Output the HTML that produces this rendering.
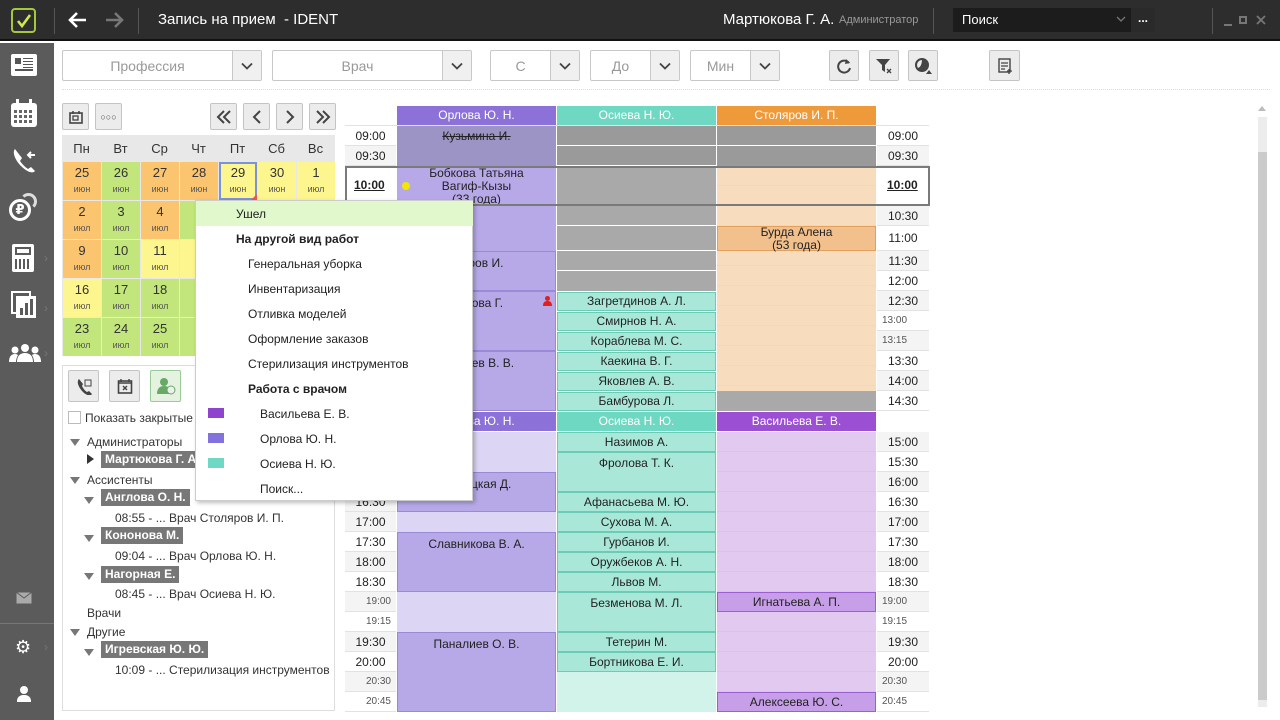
<!DOCTYPE html>
<html><head><meta charset="utf-8"><style>
*{margin:0;padding:0;box-sizing:border-box}
body{width:1280px;height:720px;overflow:hidden;background:#fff;font-family:"Liberation Sans","DejaVu Sans",sans-serif;font-size:12px;color:#222;position:relative}
.a{position:absolute}
.c{position:absolute;display:flex;align-items:center;justify-content:center;text-align:center;line-height:13px}
.t{position:absolute;display:flex;align-items:center;justify-content:center;font-size:12px;border-bottom:1px solid #e2e2e2}
.ts{font-size:10px;color:#555}
.dd{position:absolute;height:31px;border:1px solid #c8c8c8;border-radius:2px;background:#fff;color:#999;font-size:14px;display:flex;align-items:center}
.dd span{flex:1;text-align:center}
.dd i{width:29px;height:100%;border-left:1px solid #c8c8c8;background:#f0f0f0;display:flex;align-items:center;justify-content:center}
.btn{position:absolute;border:1px solid #c4c4c4;background:#ececec;border-radius:2px;display:flex;align-items:center;justify-content:center;color:#444}
.day{position:absolute;width:38px;height:38px;text-align:center;font-size:13px;color:#333;padding-top:4px;line-height:14px}
.day small{display:block;font-size:9px;color:#555;margin-top:2px}
.o{background:#fbc46f}.g{background:#c2e67b}.y{background:#fdf58d}
.mi{position:absolute;left:0;width:277px;height:25px;display:flex;align-items:center;font-size:12px;color:#222}
.tag{background:#777;color:#fff;font-weight:bold;padding:0 4px;height:17px;line-height:17px;position:absolute}
.tri{position:absolute;width:0;height:0;border-left:5px solid transparent;border-right:5px solid transparent;border-top:7px solid #777}
.tl{position:absolute;font-size:12px;color:#333}
.chev{position:absolute;left:44px;color:#777;font-size:12px}
</style></head><body>
<!-- top bar -->
<div class="a" style="left:0;top:0;width:1280px;height:41px;background:#2d2d2d;border-bottom:2px solid #111"></div>
<div class="a" style="left:11px;top:8px;width:25px;height:25px;border:2px solid #a5c83a;border-radius:4px"></div>
<svg class="a" style="left:15px;top:12px" width="18" height="18"><path d="M3 9l4 5 8-11" stroke="#d0e84a" stroke-width="2.6" fill="none"/></svg>
<div class="a" style="left:54px;top:8px;width:1px;height:26px;background:#555"></div>
<svg class="a" style="left:66px;top:10px" width="22" height="20"><path d="M20 10H4M11 3L4 10l7 7" stroke="#fff" stroke-width="2.6" fill="none"/></svg>
<svg class="a" style="left:104px;top:10px" width="22" height="20"><path d="M2 10h16M11 3l7 7-7 7" stroke="#777" stroke-width="2.6" fill="none"/></svg>
<div class="a" style="left:138px;top:8px;width:1px;height:26px;background:#555"></div>
<div class="a" style="left:158px;top:11px;color:#fff;font-size:15px">Запись на прием &nbsp;- IDENT</div>
<div class="a" style="left:723px;top:11px;color:#fff;font-size:15px">Мартюкова Г. А.</div>
<div class="a" style="left:839px;top:14px;color:#999;font-size:11px">Администратор</div>
<div class="a" style="left:933px;top:8px;width:1px;height:26px;background:#555"></div>
<div class="a" style="left:953px;top:8px;width:202px;height:24px;background:#1c1c1c"></div>
<div class="a" style="left:962px;top:12px;color:#fff;font-size:13px">Поиск</div>
<svg class="a" style="left:1116px;top:15px" width="10" height="8"><path d="M1 2l4 4 4-4" stroke="#777" stroke-width="1.3" fill="none"/></svg>
<div class="a" style="left:1131px;top:8px;width:24px;height:24px;background:#2a2a2a;color:#fff;font-weight:bold;text-align:center;line-height:20px">...</div>
<div class="a" style="left:1212px;top:8px;width:1px;height:26px;background:#555"></div>
<div class="a" style="left:1224px;top:24px;width:8px;height:2px;background:#777"></div>
<div class="a" style="left:1239px;top:16px;width:8px;height:8px;border:2px solid #777"></div>
<svg class="a" style="left:1256px;top:15px" width="10" height="10"><path d="M1 1l8 8M9 1l-8 8" stroke="#777" stroke-width="1.8"/></svg>
<!-- sidebar -->
<div class="a" style="left:0;top:43px;width:54px;height:677px;background:#5b5b5b"></div>
<div class="a" style="left:11px;top:54px;width:26px;height:22px;background:#fff;border-radius:2px"></div>
<div class="a" style="left:15px;top:58px;width:6px;height:6px;background:#555"></div>
<div class="a" style="left:23px;top:58px;width:10px;height:10px;background:repeating-linear-gradient(180deg,#555 0 1px,#fff 1px 3px)"></div>
<div class="a" style="left:15px;top:69px;width:18px;height:2px;background:#555"></div>
<div class="a" style="left:11px;top:103px;width:26px;height:24px;background:#fff;border-radius:3px"></div>
<div class="a" style="left:14px;top:110px;width:20px;height:14px;background-image:repeating-linear-gradient(90deg,transparent 0 3px,#fff 3px 5px),repeating-linear-gradient(180deg,#666 0 3px,#fff 3px 5px)"></div>
<div class="a" style="left:16px;top:99px;width:3px;height:6px;background:#fff"></div><div class="a" style="left:29px;top:99px;width:3px;height:6px;background:#fff"></div>
<svg class="a" style="left:11px;top:146px" width="26" height="28"><path d="M4 3c-3 3 0 11 6 17s12 8 14 5l-4-4-3 2c-3-2-6-5-8-8l2-3-4-5z" fill="#fff"/><path d="M24 9h-7M20 6l-3 3 3 3" stroke="#fff" stroke-width="2" fill="none"/></svg>
<div class="a" style="left:9px;top:199px;width:22px;height:22px;border:3px solid #fff;border-radius:50%;color:#fff;font-weight:bold;text-align:center;line-height:16px;font-size:13px">₽</div>
<div class="a" style="left:20px;top:193px;width:17px;height:17px;border:3px solid #ddd;border-radius:50%;border-left-color:transparent;border-bottom-color:transparent"></div>
<div class="a" style="left:12px;top:244px;width:22px;height:28px;background:#fff;border-radius:2px"></div>
<div class="a" style="left:15px;top:247px;width:16px;height:8px;border:2px solid #5b5b5b"></div>
<div class="a" style="left:15px;top:259px;width:16px;height:10px;background-image:repeating-linear-gradient(90deg,#5b5b5b 0 2px,#fff 2px 4px)"></div>
<div class="chev" style="top:251px">›</div>
<div class="a" style="left:11px;top:291px;width:20px;height:23px;border:2px solid #fff"></div>
<div class="a" style="left:16px;top:296px;width:20px;height:22px;background:#fff"></div>
<div class="a" style="left:20px;top:308px;width:3px;height:7px;background:#5b5b5b"></div><div class="a" style="left:25px;top:303px;width:3px;height:12px;background:#5b5b5b"></div><div class="a" style="left:30px;top:299px;width:3px;height:16px;background:#5b5b5b"></div>
<div class="chev" style="top:301px">›</div>
<svg class="a" style="left:9px;top:343px" width="32" height="20"><circle cx="16" cy="5" r="4" fill="#fff"/><circle cx="6" cy="7" r="3.5" fill="#fff"/><circle cx="26" cy="7" r="3.5" fill="#fff"/><path d="M8 19c0-6 3-9 8-9s8 3 8 9zM0 19c0-5 2-8 6-8 2 0 3 1 3 1-1 2-2 4-2 7zM32 19c0-5-2-8-6-8-2 0-3 1-3 1 1 2 2 4 2 7z" fill="#fff"/></svg>
<div class="chev" style="top:346px">›</div>
<svg class="a" style="left:16px;top:592px" width="16" height="12"><rect x="0.5" y="0.5" width="15" height="11" fill="#aaa"/><path d="M0 0l8 6 8-6" stroke="#5b5b5b" fill="none"/></svg>
<div class="a" style="left:0;top:623px;width:54px;height:1px;background:#777"></div>
<div class="a" style="left:15px;top:637px;color:#fff;font-size:18px">⚙</div>
<div class="chev" style="top:640px">›</div>
<div class="a" style="left:17px;top:686px;width:14px;height:16px"><div class="a" style="left:3px;top:0;width:8px;height:8px;border-radius:50%;background:#fff"></div><div class="a" style="left:0;top:9px;width:14px;height:7px;border-radius:6px 6px 0 0;background:#fff"></div></div>
<!-- toolbar -->
<div class="dd" style="left:62px;top:50px;width:200px"><span>Профессия</span><i><svg width="12" height="8"><path d="M1 1.5l5 5 5-5" stroke="#444" stroke-width="1.8" fill="none"/></svg></i></div>
<div class="dd" style="left:272px;top:50px;width:200px"><span>Врач</span><i><svg width="12" height="8"><path d="M1 1.5l5 5 5-5" stroke="#444" stroke-width="1.8" fill="none"/></svg></i></div>
<div class="dd" style="left:490px;top:50px;width:90px"><span>С</span><i><svg width="12" height="8"><path d="M1 1.5l5 5 5-5" stroke="#444" stroke-width="1.8" fill="none"/></svg></i></div>
<div class="dd" style="left:590px;top:50px;width:90px"><span>До</span><i><svg width="12" height="8"><path d="M1 1.5l5 5 5-5" stroke="#444" stroke-width="1.8" fill="none"/></svg></i></div>
<div class="dd" style="left:690px;top:50px;width:90px"><span>Мин</span><i><svg width="12" height="8"><path d="M1 1.5l5 5 5-5" stroke="#444" stroke-width="1.8" fill="none"/></svg></i></div>
<div class="btn" style="left:829px;top:50px;width:30px;height:31px"><svg width="16" height="16"><path d="M13 5A6 6 0 1 0 14 10" stroke="#444" stroke-width="2" fill="none"/><path d="M10 1l4 4-5 1z" fill="#444"/></svg></div>
<div class="btn" style="left:869px;top:50px;width:30px;height:31px"><svg width="18" height="18"><path d="M1 2h14l-5 6v7l-3-2V8z" fill="#444"/><path d="M12 12l4 4M16 12l-4 4" stroke="#444" stroke-width="1.4"/></svg></div>
<div class="btn" style="left:908px;top:50px;width:30px;height:31px"><svg width="18" height="18"><circle cx="8" cy="8" r="6" stroke="#444" stroke-width="2" fill="none"/><path d="M8 2a6 6 0 0 1 0 12c-3 0-5-2-5-3 3 0 5-3 5-9z" fill="#444"/><path d="M12 17l3-4 3 4z" fill="#444"/></svg></div>
<div class="btn" style="left:989px;top:50px;width:31px;height:31px"><svg width="16" height="16"><rect x="2" y="1" width="11" height="13" stroke="#444" stroke-width="1.4" fill="none"/><path d="M4 5h7M4 8h7M4 11h4M12 11v5M10 13h5" stroke="#444" stroke-width="1.3"/></svg></div>
<div class="a" style="left:62px;top:89px;width:1208px;border-top:1px dotted #ddd"></div>
<!-- nav -->
<div class="btn" style="left:62px;top:103px;width:27px;height:27px"><svg width="14" height="14"><rect x="1" y="3" width="12" height="10" stroke="#444" stroke-width="1.6" fill="none"/><rect x="4" y="6" width="5" height="4" stroke="#444" stroke-width="1.3" fill="none"/><path d="M4 1v3M10 1v3" stroke="#444" stroke-width="1.5"/></svg></div>
<div class="btn" style="left:95px;top:103px;width:27px;height:27px;font-size:9px">○○○</div>
<div class="btn" style="left:210px;top:103px;width:27px;height:27px"><svg width="16" height="14"><path d="M8 1L2 7l6 6M14 1L8 7l6 6" stroke="#444" stroke-width="2" fill="none"/></svg></div>
<div class="btn" style="left:243px;top:103px;width:27px;height:27px"><svg width="10" height="14"><path d="M8 1L2 7l6 6" stroke="#444" stroke-width="2" fill="none"/></svg></div>
<div class="btn" style="left:276px;top:103px;width:27px;height:27px"><svg width="10" height="14"><path d="M2 1l6 6-6 6" stroke="#444" stroke-width="2" fill="none"/></svg></div>
<div class="btn" style="left:309px;top:103px;width:27px;height:27px"><svg width="16" height="14"><path d="M2 1l6 6-6 6M8 1l6 6-6 6" stroke="#444" stroke-width="2" fill="none"/></svg></div>
<!-- calendar -->
<div class="a" style="left:62px;top:135px;width:273px;height:221px;background:#e8e8e8"></div>
<div class="a" style="left:62px;top:141px;width:273px;display:flex;font-size:13px;color:#333"><span style="width:39px;text-align:center">Пн</span><span style="width:39px;text-align:center">Вт</span><span style="width:39px;text-align:center">Ср</span><span style="width:39px;text-align:center">Чт</span><span style="width:39px;text-align:center">Пт</span><span style="width:39px;text-align:center">Сб</span><span style="width:39px;text-align:center">Вс</span></div>
<div class="day o" style="left:63px;top:162px">25<small>июн</small></div>
<div class="day g" style="left:102px;top:162px">26<small>июн</small></div>
<div class="day o" style="left:141px;top:162px">27<small>июн</small></div>
<div class="day o" style="left:180px;top:162px">28<small>июн</small></div>
<div class="day y" style="left:219px;top:162px;border:2px solid #7b93d8;padding-top:2px">29<small>июн</small></div>
<div class="a" style="left:251px;top:194px;border-left:6px solid transparent;border-bottom:6px solid #e55"></div>
<div class="day y" style="left:258px;top:162px">30<small>июн</small></div>
<div class="day y" style="left:297px;top:162px">1<small>июл</small></div>
<div class="day o" style="left:63px;top:201px">2<small>июл</small></div>
<div class="day g" style="left:102px;top:201px">3<small>июл</small></div>
<div class="day o" style="left:141px;top:201px">4<small>июл</small></div>
<div class="day g" style="left:180px;top:201px"></div>
<div class="day o" style="left:63px;top:240px">9<small>июл</small></div>
<div class="day g" style="left:102px;top:240px">10<small>июл</small></div>
<div class="day y" style="left:141px;top:240px">11<small>июл</small></div>
<div class="day y" style="left:180px;top:240px"></div>
<div class="day y" style="left:63px;top:279px">16<small>июл</small></div>
<div class="day g" style="left:102px;top:279px">17<small>июл</small></div>
<div class="day g" style="left:141px;top:279px">18<small>июл</small></div>
<div class="day g" style="left:180px;top:279px"></div>
<div class="day g" style="left:63px;top:318px">23<small>июл</small></div>
<div class="day g" style="left:102px;top:318px">24<small>июл</small></div>
<div class="day g" style="left:141px;top:318px">25<small>июл</small></div>
<div class="day g" style="left:180px;top:318px"></div>
<!-- left panel -->
<div class="a" style="left:62px;top:365px;width:273px;height:346px;border:1px solid #ddd"></div>
<div class="btn" style="left:68px;top:370px;width:31px;height:32px"><svg width="16" height="18"><path d="M3 2c-3 3 0 9 4 13s8 4 9 2l-3-3-2 1c-2-1-4-4-5-6l1-2z" fill="#444"/><rect x="9" y="3" width="6" height="6" stroke="#444" fill="none"/></svg></div>
<div class="btn" style="left:109px;top:370px;width:31px;height:32px"><svg width="16" height="16"><rect x="1.5" y="3" width="13" height="12" stroke="#444" stroke-width="1.6" fill="none"/><path d="M1 5h14M4 1v3M12 1v3M6 8l4 4M10 8l-4 4" stroke="#444" stroke-width="1.4"/></svg></div>
<div class="btn" style="left:150px;top:370px;width:31px;height:32px;border-color:#9c9;background:#e6f2e0"><svg width="20" height="18"><circle cx="8" cy="5" r="4" fill="#6a6"/><path d="M1 17c0-6 3-8 7-8s7 2 7 8z" fill="#6a6"/><circle cx="15" cy="13" r="4" fill="#eee" stroke="#6a6"/></svg></div>
<div class="a" style="left:68px;top:411px;width:13px;height:13px;border:1px solid #bbb"></div>
<div class="tl" style="left:85px;top:411px">Показать закрытые</div>
<div class="tri" style="left:70px;top:439px"></div><div class="tl" style="left:87px;top:435px">Администраторы</div>
<div class="a" style="left:87px;top:454px;border-top:5px solid transparent;border-bottom:5px solid transparent;border-left:7px solid #333"></div>
<div class="tag" style="left:101px;top:451px">Мартюкова Г. А</div>
<div class="tri" style="left:70px;top:477px"></div><div class="tl" style="left:87px;top:473px">Ассистенты</div>
<div class="tri" style="left:84px;top:497px"></div><div class="tag" style="left:101px;top:489px">Англова О. Н.</div>
<div class="tl" style="left:115px;top:511px">08:55 - ... Врач Столяров И. П.</div>
<div class="tri" style="left:84px;top:535px"></div><div class="tag" style="left:101px;top:527px">Кононова М.</div>
<div class="tl" style="left:115px;top:549px">09:04 - ... Врач Орлова Ю. Н.</div>
<div class="tri" style="left:84px;top:573px"></div><div class="tag" style="left:101px;top:566px">Нагорная Е.</div>
<div class="tl" style="left:115px;top:587px">08:45 - ... Врач Осиева Н. Ю.</div>
<div class="tl" style="left:87px;top:606px">Врачи</div>
<div class="tri" style="left:70px;top:629px"></div><div class="tl" style="left:87px;top:625px">Другие</div>
<div class="tri" style="left:84px;top:649px"></div><div class="tag" style="left:101px;top:641px">Игревская Ю. Ю.</div>
<div class="tl" style="left:115px;top:663px">10:09 - ... Стерилизация инструментов</div>
<!-- grid headers -->
<div class="c" style="left:397px;top:106px;width:159px;height:19px;background:#8c72d8;color:#fff">Орлова Ю. Н.</div>
<div class="c" style="left:557px;top:106px;width:159px;height:19px;background:#6fd8c2;color:#fff">Осиева Н. Ю.</div>
<div class="c" style="left:717px;top:106px;width:159px;height:19px;background:#ee9a3a;color:#fff">Столяров И. П.</div>
<div class="c" style="left:397px;top:412px;width:159px;height:19px;background:#8c72d8;color:#fff">Орлова Ю. Н.</div>
<div class="c" style="left:557px;top:412px;width:159px;height:19px;background:#6fd8c2;color:#fff">Осиева Н. Ю.</div>
<div class="c" style="left:717px;top:412px;width:159px;height:19px;background:#9b4fd2;color:#fff">Васильева Е. В.</div>
<!-- time columns -->
<div class="a" style="left:345px;top:125px;width:584px;height:287px;border-top:1px solid #e2e2e2"></div>
<div class="t" style="left:345px;top:126px;width:51px;height:20px;background:#fff">09:00</div>
<div class="t" style="left:345px;top:146px;width:51px;height:20px;background:#f4f4f4">09:30</div>
<div class="t" style="left:345px;top:206px;width:51px;height:20px;background:#f4f4f4">10:30</div>
<div class="t" style="left:345px;top:226px;width:51px;height:25px;background:#fff">11:00</div>
<div class="t" style="left:345px;top:251px;width:51px;height:20px;background:#f4f4f4">11:30</div>
<div class="t" style="left:345px;top:271px;width:51px;height:20px;background:#fff">12:00</div>
<div class="t" style="left:345px;top:291px;width:51px;height:20px;background:#f4f4f4">12:30</div>
<div class="t" style="left:345px;top:311px;width:51px;height:20px;background:#fff">13:00</div>
<div class="t" style="left:345px;top:331px;width:51px;height:20px;background:#f4f4f4">13:15</div>
<div class="t" style="left:345px;top:351px;width:51px;height:20px;background:#fff">13:30</div>
<div class="t" style="left:345px;top:371px;width:51px;height:20px;background:#f4f4f4">14:00</div>
<div class="t" style="left:345px;top:391px;width:51px;height:20px;background:#fff">14:30</div>
<div class="t" style="left:877px;top:126px;width:52px;height:20px;background:#fff">09:00</div>
<div class="t" style="left:877px;top:146px;width:52px;height:20px;background:#f4f4f4">09:30</div>
<div class="t" style="left:877px;top:206px;width:52px;height:20px;background:#f4f4f4">10:30</div>
<div class="t" style="left:877px;top:226px;width:52px;height:25px;background:#fff">11:00</div>
<div class="t" style="left:877px;top:251px;width:52px;height:20px;background:#f4f4f4">11:30</div>
<div class="t" style="left:877px;top:271px;width:52px;height:20px;background:#fff">12:00</div>
<div class="t" style="left:877px;top:291px;width:52px;height:20px;background:#f4f4f4">12:30</div>
<div class="t ts" style="left:877px;top:311px;width:52px;height:20px;background:#fff;justify-content:flex-start;padding-left:5px">13:00</div>
<div class="t ts" style="left:877px;top:331px;width:52px;height:20px;background:#f4f4f4;justify-content:flex-start;padding-left:5px">13:15</div>
<div class="t" style="left:877px;top:351px;width:52px;height:20px;background:#fff">13:30</div>
<div class="t" style="left:877px;top:371px;width:52px;height:20px;background:#f4f4f4">14:00</div>
<div class="t" style="left:877px;top:391px;width:52px;height:20px;background:#fff">14:30</div>
<!-- bottom times -->
<div class="t" style="left:345px;top:432px;width:51px;height:20px;background:#fff">15:00</div>
<div class="t" style="left:345px;top:452px;width:51px;height:20px;background:#f4f4f4">15:30</div>
<div class="t" style="left:345px;top:472px;width:51px;height:20px;background:#fff">16:00</div>
<div class="t" style="left:345px;top:492px;width:51px;height:20px;background:#f4f4f4">16:30</div>
<div class="t" style="left:345px;top:512px;width:51px;height:20px;background:#f4f4f4">17:00</div>
<div class="t" style="left:345px;top:532px;width:51px;height:20px;background:#fff">17:30</div>
<div class="t" style="left:345px;top:552px;width:51px;height:20px;background:#f4f4f4">18:00</div>
<div class="t" style="left:345px;top:572px;width:51px;height:20px;background:#fff">18:30</div>
<div class="t ts" style="left:345px;top:592px;width:51px;height:20px;background:#f4f4f4;justify-content:flex-end;padding-right:5px">19:00</div>
<div class="t ts" style="left:345px;top:612px;width:51px;height:20px;background:#fff;justify-content:flex-end;padding-right:5px">19:15</div>
<div class="t" style="left:345px;top:632px;width:51px;height:20px;background:#f4f4f4">19:30</div>
<div class="t" style="left:345px;top:652px;width:51px;height:20px;background:#fff">20:00</div>
<div class="t ts" style="left:345px;top:672px;width:51px;height:20px;background:#f4f4f4;justify-content:flex-end;padding-right:5px">20:30</div>
<div class="t ts" style="left:345px;top:692px;width:51px;height:20px;background:#fff;justify-content:flex-end;padding-right:5px">20:45</div>
<div class="t" style="left:877px;top:432px;width:52px;height:20px;background:#f4f4f4">15:00</div>
<div class="t" style="left:877px;top:452px;width:52px;height:20px;background:#fff">15:30</div>
<div class="t" style="left:877px;top:472px;width:52px;height:20px;background:#f4f4f4">16:00</div>
<div class="t" style="left:877px;top:492px;width:52px;height:20px;background:#fff">16:30</div>
<div class="t" style="left:877px;top:512px;width:52px;height:20px;background:#f4f4f4">17:00</div>
<div class="t" style="left:877px;top:532px;width:52px;height:20px;background:#fff">17:30</div>
<div class="t" style="left:877px;top:552px;width:52px;height:20px;background:#f4f4f4">18:00</div>
<div class="t" style="left:877px;top:572px;width:52px;height:20px;background:#fff">18:30</div>
<div class="t ts" style="left:877px;top:592px;width:52px;height:20px;background:#f4f4f4;justify-content:flex-start;padding-left:5px">19:00</div>
<div class="t ts" style="left:877px;top:612px;width:52px;height:20px;background:#fff;justify-content:flex-start;padding-left:5px">19:15</div>
<div class="t" style="left:877px;top:632px;width:52px;height:20px;background:#f4f4f4">19:30</div>
<div class="t" style="left:877px;top:652px;width:52px;height:20px;background:#fff">20:00</div>
<div class="t ts" style="left:877px;top:672px;width:52px;height:20px;background:#f4f4f4;justify-content:flex-start;padding-left:5px">20:30</div>
<div class="t ts" style="left:877px;top:692px;width:52px;height:20px;background:#fff;justify-content:flex-start;padding-left:5px">20:45</div>
<!-- top grid: Orlova -->
<div class="c" style="left:397px;top:126px;width:159px;height:40px;background:#9d94c6;align-items:flex-start;padding-top:4px;text-decoration:line-through">Кузьмина И.</div>
<div class="c" style="left:397px;top:166px;width:159px;height:85px;background:#b7a9e8;align-items:flex-start;padding-top:1px">Бобкова Татьяна<br>Вагиф-Кызы<br>(33 года)</div>
<div class="a" style="left:402px;top:182px;width:8px;height:8px;border-radius:50%;background:#f3e600"></div>
<div class="c" style="left:397px;top:251px;width:159px;height:40px;background:#b7a9e8;border:1px solid #9a88d8;align-items:flex-start;padding-top:5px">Егоров И.</div>
<div class="c" style="left:397px;top:291px;width:159px;height:60px;background:#b7a9e8;border:1px solid #9a88d8;align-items:flex-start;padding-top:5px">Попова Г.</div>
<svg class="a" style="left:543px;top:296px" width="9" height="10"><circle cx="4.5" cy="2.5" r="2.5" fill="#e02020"/><path d="M0 10c0-4 2-5 4.5-5s4.5 1 4.5 5z" fill="#e02020"/></svg>
<div class="c" style="left:397px;top:351px;width:159px;height:60px;background:#b7a9e8;border:1px solid #9a88d8;align-items:flex-start;padding-top:5px">Сергеев В. В.</div>
<!-- Osieva top -->
<div class="a" style="left:557px;top:126px;width:159px;height:19px;background:#9a9a9a"></div>
<div class="a" style="left:557px;top:146px;width:159px;height:19px;background:#9a9a9a"></div>
<div class="a" style="left:557px;top:166px;width:159px;height:40px;background:#a9a9a9"></div>
<div class="a" style="left:557px;top:206px;width:159px;height:19px;background:#a9a9a9"></div>
<div class="a" style="left:557px;top:226px;width:159px;height:24px;background:#a9a9a9"></div>
<div class="a" style="left:557px;top:251px;width:159px;height:19px;background:#a9a9a9"></div>
<div class="a" style="left:557px;top:271px;width:159px;height:20px;background:#a9a9a9"></div>
<div class="c" style="left:557px;top:292px;width:159px;height:19px;background:#a9e8d8;border:1px solid #6ccbb5">Загретдинов А. Л.</div>
<div class="c" style="left:557px;top:312px;width:159px;height:19px;background:#a9e8d8;border:1px solid #6ccbb5">Смирнов Н. А.</div>
<div class="c" style="left:557px;top:332px;width:159px;height:19px;background:#a9e8d8;border:1px solid #6ccbb5">Кораблева М. С.</div>
<div class="c" style="left:557px;top:352px;width:159px;height:19px;background:#a9e8d8;border:1px solid #6ccbb5">Каекина В. Г.</div>
<div class="c" style="left:557px;top:372px;width:159px;height:19px;background:#a9e8d8;border:1px solid #6ccbb5">Яковлев А. В.</div>
<div class="c" style="left:557px;top:392px;width:159px;height:19px;background:#a9e8d8;border:1px solid #6ccbb5">Бамбурова Л.</div>
<!-- Stolyarov top -->
<div class="a" style="left:717px;top:126px;width:159px;height:19px;background:#9a9a9a"></div>
<div class="a" style="left:717px;top:146px;width:159px;height:20px;background:#9a9a9a"></div>
<div class="a" style="left:717px;top:166px;width:159px;height:225px;background:#f8dcbe;background-image:repeating-linear-gradient(180deg,#f8dcbe 0 19px,#f6d6b6 19px 20px)"></div>
<div class="c" style="left:717px;top:226px;width:159px;height:25px;background:#f2c08c;border:1px solid #e2a05c">Бурда Алена<br>(53 года)</div>
<div class="a" style="left:717px;top:391px;width:159px;height:20px;background:#a9a9a9"></div>
<!-- highlighted row -->
<div class="a" style="left:345px;top:166px;width:585px;height:40px;border:2px solid #7a7a7a"></div>
<div class="a" style="left:354px;top:178px;font-weight:bold;text-decoration:underline;font-size:12px">10:00</div>
<div class="a" style="left:887px;top:178px;font-weight:bold;text-decoration:underline;font-size:12px">10:00</div>
<!-- bottom grid -->
<div class="a" style="left:397px;top:432px;width:159px;height:280px;background:#ddd5f4"></div>
<div class="c" style="left:397px;top:472px;width:159px;height:40px;background:#b7a9e8;border:1px solid #9a88d8;align-items:flex-start;padding-top:5px">Высоцкая Д.</div>
<div class="c" style="left:397px;top:532px;width:159px;height:60px;background:#b7a9e8;border:1px solid #9a88d8;align-items:flex-start;padding-top:5px">Славникова В. А.</div>
<div class="c" style="left:397px;top:632px;width:159px;height:80px;background:#b7a9e8;border:1px solid #9a88d8;align-items:flex-start;padding-top:5px">Паналиев О. В.</div>
<div class="a" style="left:557px;top:432px;width:159px;height:280px;background:#d2f3ea"></div>
<div class="c" style="left:557px;top:432px;width:159px;height:20px;background:#a9e8d8;border:1px solid #6ccbb5">Назимов А.</div>
<div class="c" style="left:557px;top:452px;width:159px;height:40px;background:#a9e8d8;border:1px solid #6ccbb5;align-items:flex-start;padding-top:4px">Фролова Т. К.</div>
<div class="c" style="left:557px;top:492px;width:159px;height:20px;background:#a9e8d8;border:1px solid #6ccbb5">Афанасьева М. Ю.</div>
<div class="c" style="left:557px;top:512px;width:159px;height:20px;background:#a9e8d8;border:1px solid #6ccbb5">Сухова М. А.</div>
<div class="c" style="left:557px;top:532px;width:159px;height:20px;background:#a9e8d8;border:1px solid #6ccbb5">Гурбанов И.</div>
<div class="c" style="left:557px;top:552px;width:159px;height:20px;background:#a9e8d8;border:1px solid #6ccbb5">Оружбеков А. Н.</div>
<div class="c" style="left:557px;top:572px;width:159px;height:20px;background:#a9e8d8;border:1px solid #6ccbb5">Львов М.</div>
<div class="c" style="left:557px;top:592px;width:159px;height:40px;background:#a9e8d8;border:1px solid #6ccbb5;align-items:flex-start;padding-top:4px">Безменова М. Л.</div>
<div class="c" style="left:557px;top:632px;width:159px;height:20px;background:#a9e8d8;border:1px solid #6ccbb5">Тетерин М.</div>
<div class="c" style="left:557px;top:652px;width:159px;height:20px;background:#a9e8d8;border:1px solid #6ccbb5">Бортникова Е. И.</div>
<div class="a" style="left:717px;top:432px;width:159px;height:280px;background:#e2c9ef;background-image:repeating-linear-gradient(180deg,#e2c9ef 0 19px,#dcc2ea 19px 20px)"></div>
<div class="c" style="left:717px;top:592px;width:159px;height:20px;background:#c79ee8;border:1px solid #9a5fd0">Игнатьева А. П.</div>
<div class="c" style="left:717px;top:692px;width:159px;height:20px;background:#c79ee8;border:1px solid #9a5fd0">Алексеева Ю. С.</div>
<!-- scrollbar -->
<div class="a" style="left:1258px;top:117px;width:9px;height:590px;background:#ececec"></div>
<div class="a" style="left:1258px;top:152px;width:9px;height:548px;background:#cbcbcb"></div>
<div class="a" style="left:1258px;top:106px;border-left:4px solid transparent;border-right:4px solid transparent;border-bottom:5px solid #bbb"></div>
<!-- context menu -->
<div class="a" style="left:195px;top:200px;width:278px;height:301px;background:#fff;border:1px solid #ccc;box-shadow:2px 2px 4px rgba(0,0,0,.25)">
<div class="mi" style="top:0;background:#e0f8cc;padding-left:40px">Ушел</div>
<div class="mi" style="top:25px;padding-left:40px;font-weight:bold">На другой вид работ</div>
<div class="mi" style="top:50px;padding-left:52px">Генеральная уборка</div>
<div class="mi" style="top:75px;padding-left:52px">Инвентаризация</div>
<div class="mi" style="top:100px;padding-left:52px">Отливка моделей</div>
<div class="mi" style="top:125px;padding-left:52px">Оформление заказов</div>
<div class="mi" style="top:150px;padding-left:52px">Стерилизация инструментов</div>
<div class="mi" style="top:175px;padding-left:52px;font-weight:bold">Работа с врачом</div>
<div class="mi" style="top:200px;padding-left:64px">Васильева Е. В.</div>
<div class="mi" style="top:225px;padding-left:64px">Орлова Ю. Н.</div>
<div class="mi" style="top:250px;padding-left:64px">Осиева Н. Ю.</div>
<div class="mi" style="top:275px;padding-left:64px">Поиск...</div>
<div class="a" style="left:12px;top:207px;width:16px;height:10px;background:#8e44cc"></div>
<div class="a" style="left:12px;top:232px;width:16px;height:10px;background:#8472dc"></div>
<div class="a" style="left:12px;top:257px;width:16px;height:10px;background:#6fd8c2"></div>
</div>
</body></html>
